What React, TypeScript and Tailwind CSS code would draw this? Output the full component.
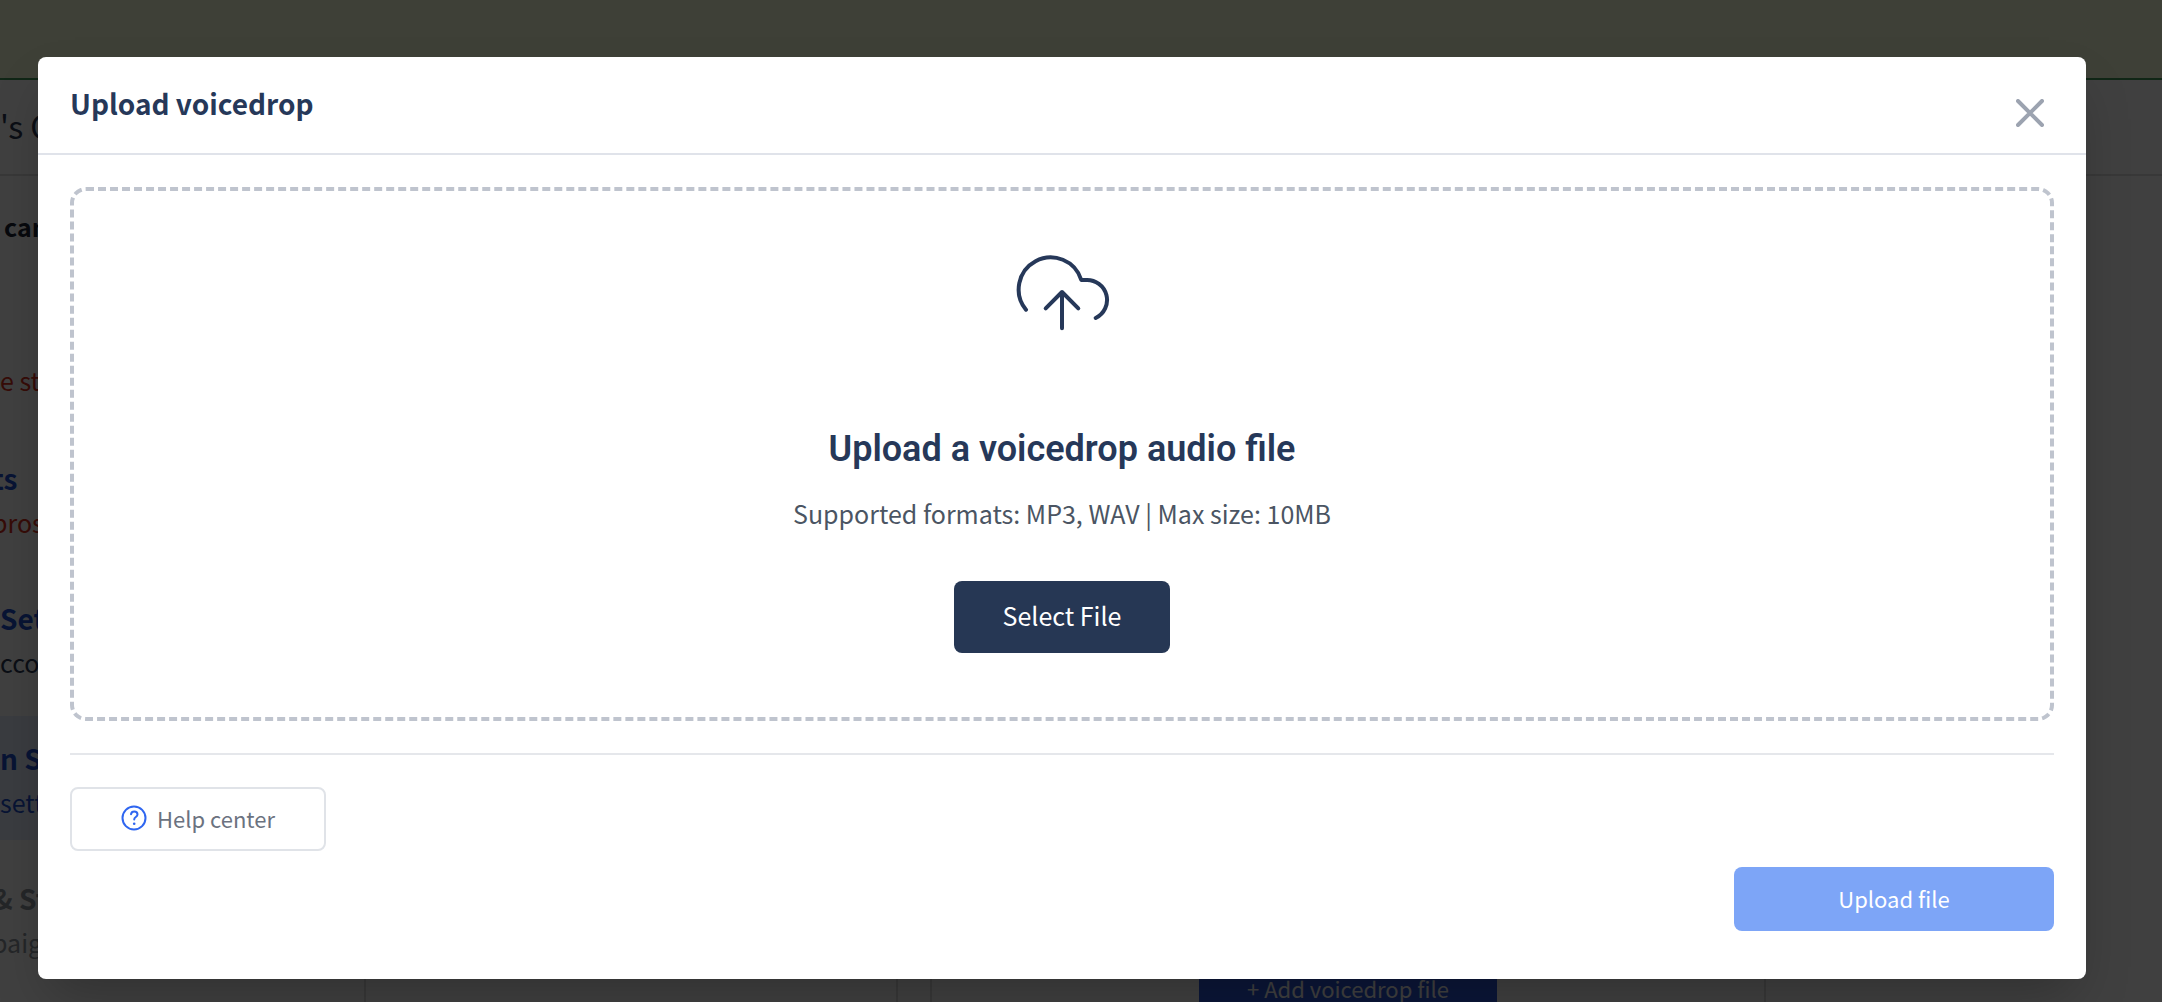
const sidebarItems = [
  {
    title: 'ts',
    note: 'pros',
    box: '-ml-2',
    titleColor: 'text-[#2350d0]',
    noteColor: 'text-[#d83020]',
  },
  {
    title: 'Set',
    note: 'cco',
    box: '',
    titleColor: 'text-[#2350d0]',
    noteColor: 'text-[#2c3a54]',
  },
  {
    title: 'n S',
    note: 'sett',
    box: 'bg-[#e8f0ff]',
    titleColor: 'text-[#2350d0]',
    noteColor: 'text-[#2350d0]',
  },
  {
    title: '& St',
    note: 'paig',
    box: '-ml-2',
    titleColor: 'text-[#9096a0]',
    noteColor: 'text-[#9096a0]',
  },
];

const CampaignPage = () => {
  return (
    <div className="flex h-screen flex-col overflow-hidden bg-white text-[#2c3a54]">
      <header className="h-20 shrink-0 border-b-2 border-[#409858] bg-[#f8ffdc]" />
      <div className="flex h-24 shrink-0 items-center border-b-2 border-[#e0e0e0] pb-1 text-[32px]">
        's C
      </div>

      <div className="flex min-h-0 grow">
        {/* Steps */}
        <aside className="flex w-[366px] shrink-0 flex-col border-r-2 border-[#e0e0e0]">
          <p className="h-[138px] shrink-0 pt-8 pl-1 text-[25px] leading-9 font-bold text-[#1c2434]">
            can
          </p>
          <p className="h-[122px] shrink-0 pt-12 text-[25px] leading-9 text-[#d83020]">
            e st
          </p>
          {sidebarItems.map((item) => (
            <div
              key={item.title}
              className={`mb-4 h-[124px] shrink-0 pt-5 leading-[44px] ${item.box}`}
            >
              <h3 className={`text-[28px] font-bold ${item.titleColor}`}>
                {item.title}
              </h3>
              <p className={`text-[25px] ${item.noteColor}`}>{item.note}</p>
            </div>
          ))}
        </aside>

        {/* Content */}
        <div className="w-[532px] border-r-2 border-[#e0e0e0]" />
        <div className="w-[34px] border-r-2 border-[#e0e0e0]" />
        <div className="flex w-[834px] items-end justify-center border-r-2 border-[#e0e0e0]">
          <button
            type="button"
            className="h-12 w-[298px] bg-[#2c58e0] pt-5 text-[22px] leading-7 text-white"
          >
            + Add voicedrop file
          </button>
        </div>
      </div>
    </div>
  );
};

const CloudUpload = () => {
  return (
    <svg
      viewBox="17 0 112 112"
      className="h-28 w-28"
      fill="none"
      stroke="currentColor"
      strokeWidth="4"
      strokeLinecap="round"
      strokeLinejoin="round"
      aria-hidden="true"
    >
      <path d="M37 70.7A32 32 0 1 1 92.3 41H97a20 20 0 0 1 9.7 38" />
      <path d="M73 89.3V53M56.7 69.3 73 53l16.3 16.3" />
    </svg>
  );
};

const HelpIcon = () => {
  return (
    <svg
      viewBox="0 0 26 26"
      className="h-[26px] w-[26px] text-[#2f66f0]"
      fill="none"
      stroke="currentColor"
      strokeWidth="2"
      strokeLinecap="round"
      strokeLinejoin="round"
      aria-hidden="true"
    >
      <circle cx="13" cy="13" r="11.5" />
      <path d="M10 9.2c.3-1.6 1.6-2.6 3.2-2.6 1.9 0 3.3 1.2 3.3 2.9 0 2.6-3.3 2.5-3.3 5" />
      <circle cx="13.2" cy="18.8" r="1.3" fill="currentColor" stroke="none" />
    </svg>
  );
};

const UploadModal = () => {
  return (
    <div
      role="dialog"
      aria-modal="true"
      aria-labelledby="upload-title"
      className="mt-[57px] mr-[76px] ml-[38px] rounded-lg bg-white shadow-2xl"
    >
      <div className="flex h-[98px] items-start justify-between border-b-2 border-[#e0e3ea] px-8">
        <h2
          id="upload-title"
          className="pt-[26px] text-[28px] leading-10 font-bold text-[#263859]"
        >
          Upload voicedrop
        </h2>
        <button type="button" aria-label="Close" className="mt-8 p-2.5">
          <svg
            viewBox="0 0 28 28"
            className="h-7 w-7 text-[#9ca3b0]"
            stroke="currentColor"
            strokeWidth="4"
            strokeLinecap="round"
            aria-hidden="true"
          >
            <path d="M2 2l24 24M26 2 2 26" />
          </svg>
        </button>
      </div>

      <div className="px-8 pt-8 pb-12">
        {/* Drop zone */}
        <div className="flex flex-col items-center rounded-2xl border-4 border-dashed border-[#bfc4ce] pt-12 pb-16 text-[#263859]">
          <CloudUpload />
          <h3 className="mt-[70px] font-[Roboto,sans-serif] text-[36px] leading-[56px] font-semibold">
            Upload a voicedrop audio file
          </h3>
          <p className="mt-4 text-[25px] leading-10 text-[#4b5563]">
            Supported formats: MP3, WAV | Max size: 10MB
          </p>
          <button
            type="button"
            className="mt-12 h-[72px] w-[216px] rounded-lg bg-[#263754] pb-0.5 text-[25px] text-white"
          >
            Select File
          </button>
        </div>

        <hr className="mt-8 border-t-2 border-[#e5e7eb]" />

        <button
          type="button"
          className="mt-8 flex h-16 w-64 items-center justify-center gap-2.5 rounded-lg border-2 border-[#e0e3e8] pb-0.5 text-[22px] text-[#6b7280]"
        >
          <HelpIcon />
          Help center
        </button>
        <div className="mt-4 flex justify-end">
          <button
            type="button"
            disabled
            className="h-16 w-80 rounded-lg bg-[#7da5f7] pb-0.5 text-[22px] text-white"
          >
            Upload file
          </button>
        </div>
      </div>
    </div>
  );
};

const App = () => {
  return (
    <main className="relative font-['Noto_Sans_CJK_SC',sans-serif]">
      <CampaignPage />
      <div className="absolute inset-0 overflow-hidden bg-black/75">
        <UploadModal />
      </div>
    </main>
  );
};

export default App;
